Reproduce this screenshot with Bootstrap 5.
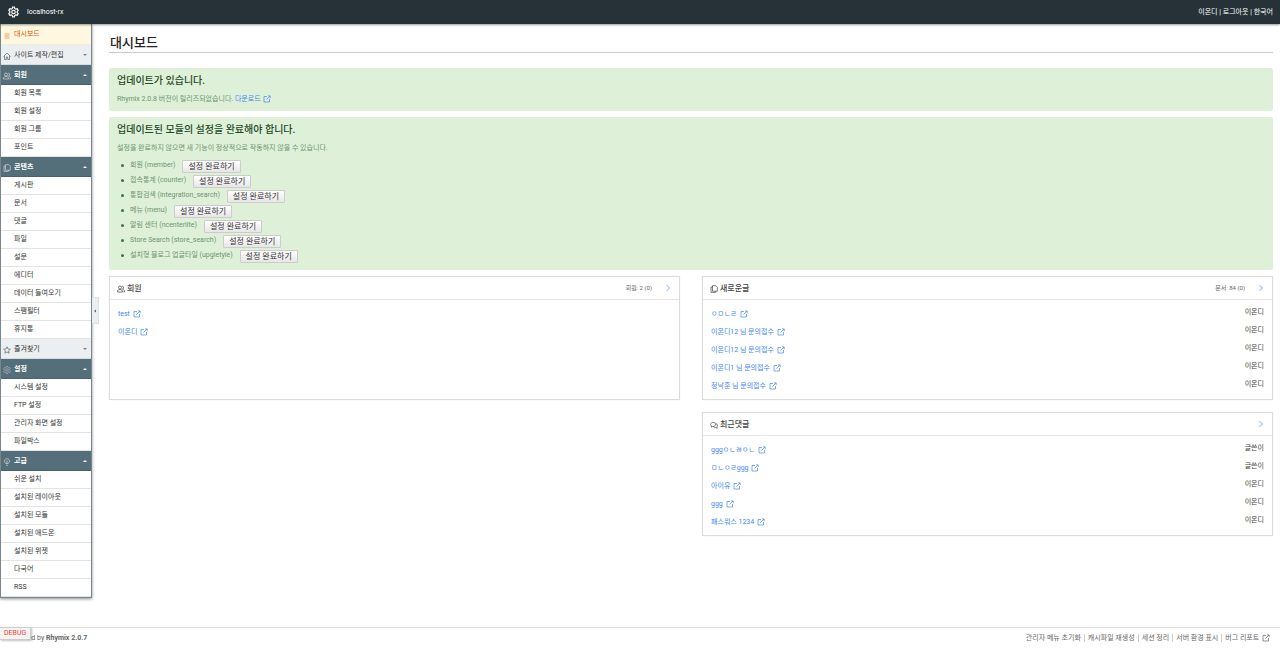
<!DOCTYPE html>
<html lang="ko">
<head>
<meta charset="utf-8">
<meta name="viewport" content="width=device-width, initial-scale=1">
<title>대시보드 - Rhymix</title>
<link href="https://cdn.jsdelivr.net/npm/bootstrap@5.3.0/dist/css/bootstrap.min.css" rel="stylesheet">
<style>
  body { font-family: Roboto, "Noto Sans CJK KR", sans-serif; font-size: 7px; line-height: 18px; color: #444; background: #fff; }
  a { text-decoration: none; color: #4285f4; }
  svg { fill: none; stroke: currentColor; flex: none; }
  .ico { width: 8px; height: 8px; stroke-width: .7; }
  .out { margin-left: 1px; }
  .topbar { height: 24px; background: #263238; color: #fff; box-shadow: 0 1px 2px rgba(0,0,0,.4); z-index: 3; padding: 0 7px 0 8px; }
  .topbar a { color: #fff; }
  .topbar svg { stroke-width: 1.3; }
  .side { width: 92px; flex: none; }
  .menu { border: 1px solid #78868d; border-top: 0; box-shadow: 0 1px 3px rgba(0,0,0,.45); }
  .menu ul { background: #fff; }
  .menu-top { height: 20px; padding: 0 4px 0 2px; gap: 3px; width: 100%; border: 0; border-bottom: 1px solid #d5dce0; background: #eceff1; color: #333; text-align: left; }
  .menu-top.now { height: 21px; background: #fff8e1; color: #e65100; border-color: #f3ecd6; }
  .menu-top.open { background: #546e7a; color: #fff; border-color: #4a626d; font-weight: 700; }
  .menu-top .ico { margin-top: 3px; opacity: .75; }
  .menu-top .label-text { flex: 1; }
  .caret { width: 4px; border: 2px solid transparent; border-top-color: #78868d; border-bottom-width: 0; }
  .open .caret { border-top-width: 0; border-bottom: 2px solid #fff; }
  .sub a { display: block; height: 18px; line-height: 17px; padding-left: 13px; color: #333; border-bottom: 1px solid #e3e3e3; }
  .fold { left: 92px; top: 273px; width: 7px; height: 27px; line-height: 26px; padding: 0; border: 1px solid #dde1e4; border-left: 0; background: #eceff1; color: #546e7a; }
  .content-area { padding: 10px 7px 12px 17px; min-width: 0; }
  h1 { font-size: 13px; line-height: 18px; font-weight: 500; color: #222; padding-left: 1px; border-bottom: 1px solid #ccc; margin-bottom: 15px; }
  .notice { background: #dff0d8; color: #6d9470; border-radius: 2px; padding: 4px 8px 3px; margin-bottom: 6px; }
  .notice h2 { font-size: 10px; line-height: 18px; font-weight: 500; color: #234a26; margin: 0; }
  .notice ul { margin: 1px 0 4px; }
  .notice li { height: 15px; line-height: 15px; display: flex; align-items: center; }
  .notice li::before { content: ""; width: 3px; height: 3px; border-radius: 50%; background: #3c763d; margin: 0 6px 0 4px; }
  .run { height: 13px; font-size: 8px; line-height: 11px; padding: 0 5px; margin: 2px 0 0 7px; border: 1px solid #ccc; border-radius: 1px; background: linear-gradient(#fff, #e6e6e6); color: #333; }
  .panels { column-gap: 22px; }
  .panel { border: 1px solid #dcdcdc; min-height: 124px; box-shadow: 0 0 1px rgba(0,0,0,.1); }
  .panel header { height: 23px; border-bottom: 1px solid #e3e3e3; padding: 0 7px; }
  .panel h2 { font-size: 8px; font-weight: 500; margin: 2px 0 0; gap: 2px; color: #444; }
  .count { font-size: 6px; color: #666; }
  .panel ul { padding: 3px 8px 4px; }
  .panel li { height: 18px; }
  .panel li a { padding-top: 2px; }
  .foot { border-top: 1px solid #e0e0e0; height: 33px; padding: 1px 10px 0 8px; color: #666; }
  .foot a { color: #666; }
  .foot nav a + a { border-left: 1px solid #ccc; margin-left: 3px; padding-left: 3px; line-height: 8px; }
  .debug { left: 0; bottom: 20px; height: 13px; line-height: 11px; padding: 0 4px; font-size: 7px; border: 1px solid #ccc; border-left: 0; background: #f4f4f4; color: #f44336; box-shadow: 1px 1px 2px rgba(0,0,0,.25); }
</style>
</head>
<body class="d-flex flex-column min-vh-100">
<svg class="d-none">
  <symbol id="gear" viewBox="0 0 12 12"><path d="M5 .7h2l.4 1.6 1.1.6 1.6-.5 1 1.8L10 5.4v1.2l1.1 1.2-1 1.8-1.6-.5-1.1.6L7 11.300H5l-.4-1.600-1.100-.6-1.600.5-1-1.800L2 6.600V5.400L.9 4.200l1-1.800 1.600.5 1.100-.6z"/><circle cx="6" cy="6" r="1.9"/></symbol>
  <symbol id="list" viewBox="0 0 8 8"><path d="M1.500 2h5M1.500 4h5M1.500 6h5"/></symbol>
  <symbol id="home" viewBox="0 0 8 8"><path d="M.5 4.500L4 1l3.500 3.500M1.500 4v3.500h1.800V5h1.400v2.500h1.800V4"/></symbol>
  <symbol id="users" viewBox="0 0 8 8"><circle cx="3" cy="2.500" r="1.500"/><path d="M.5 7c0-2 1-2.500 2.500-2.500S5.500 5 5.500 7zM5 1c2 0 2 3 .5 3C7 4.500 7.500 5.500 7.500 7h-1"/></symbol>
  <symbol id="docs" viewBox="0 0 8 8"><path d="M2.500.7h3.300l1.500 1.500v4H2.500zM2.500 2H1v5.400h4.500V6.300"/></symbol>
  <symbol id="star" viewBox="0 0 8 8"><path d="M4 .8l1 2.200 2.400.2-1.800 1.600.5 2.400L4 6 1.900 7.200l.5-2.400L.6 3.200 3 3z"/></symbol>
  <symbol id="bulb" viewBox="0 0 8 8"><path d="M3 5.500C0 3.800 1.500.7 4 .7s4 3.100 1 4.800zM3 7.300h2M4 5.500v-2l-1-1M4 3.500l1-1"/></symbol>
  <symbol id="talk" viewBox="0 0 8 8"><path d="M1.700 5.300C-.2 4 .6 1.300 3 1.300s3.200 1.800 2.200 3.200S3 5.300 1 6zM5.600 2.500c2 .3 2.300 2.500 1.200 3.500l.4 1.200-1.400-.6c-1 .2-1.800 0-2.300-.7"/></symbol>
  <symbol id="ext" viewBox="0 0 8 8"><path d="M4 1.500H1v5.500h5.500V4M5 .9h2.200v2.300M7 1L3.500 4.500"/></symbol>
  <symbol id="next" viewBox="0 0 8 8"><path d="M2.500 1l3 3-3 3"/></symbol>
</svg>

<header class="topbar d-flex align-items-center justify-content-between position-relative">
  <a href="#" class="d-flex align-items-center gap-2"><svg width="11" height="12"><use href="#gear"/></svg><span>localhost-rx</span></a>
  <nav><a href="#">이온디</a> | <a href="#">로그아웃</a> | <a href="#">한국어</a></nav>
</header>

<div class="d-flex flex-grow-1 position-relative">
  <aside class="side">
    <nav class="menu">
      <a href="#" class="menu-top now d-flex align-items-center"><svg class="ico"><use href="#list"/></svg><span class="label-text">대시보드</span></a>
      <button class="menu-top d-flex align-items-center"><svg class="ico"><use href="#home"/></svg><span class="label-text">사이트 제작/편집</span><i class="caret"></i></button>
      <button class="menu-top open d-flex align-items-center"><svg class="ico"><use href="#users"/></svg><span class="label-text">회원</span><i class="caret"></i></button>
      <ul class="sub list-unstyled mb-0">
        <li><a href="#">회원 목록</a></li><li><a href="#">회원 설정</a></li><li><a href="#">회원 그룹</a></li><li><a href="#">포인트</a></li>
      </ul>
      <button class="menu-top open d-flex align-items-center"><svg class="ico"><use href="#docs"/></svg><span class="label-text">콘텐츠</span><i class="caret"></i></button>
      <ul class="sub list-unstyled mb-0">
        <li><a href="#">게시판</a></li><li><a href="#">문서</a></li><li><a href="#">댓글</a></li><li><a href="#">파일</a></li><li><a href="#">설문</a></li><li><a href="#">에디터</a></li><li><a href="#">데이터 들여오기</a></li><li><a href="#">스팸필터</a></li><li><a href="#">휴지통</a></li>
      </ul>
      <button class="menu-top d-flex align-items-center"><svg class="ico"><use href="#star"/></svg><span class="label-text">즐겨찾기</span><i class="caret"></i></button>
      <button class="menu-top open d-flex align-items-center"><svg class="ico" viewBox="0 0 12 12"><use href="#gear"/></svg><span class="label-text">설정</span><i class="caret"></i></button>
      <ul class="sub list-unstyled mb-0">
        <li><a href="#">시스템 설정</a></li><li><a href="#">FTP 설정</a></li><li><a href="#">관리자 화면 설정</a></li><li><a href="#">파일박스</a></li>
      </ul>
      <button class="menu-top open d-flex align-items-center"><svg class="ico"><use href="#bulb"/></svg><span class="label-text">고급</span><i class="caret"></i></button>
      <ul class="sub list-unstyled mb-0">
        <li><a href="#">쉬운 설치</a></li><li><a href="#">설치된 레이아웃</a></li><li><a href="#">설치된 모듈</a></li><li><a href="#">설치된 애드온</a></li><li><a href="#">설치된 위젯</a></li><li><a href="#">다국어</a></li><li><a href="#">RSS</a></li>
      </ul>
    </nav>
    <button class="fold position-absolute" aria-label="메뉴 접기"><svg class="d-block" width="6" height="8" viewBox="0 0 6 8"><path d="M4 2.500L2 4l2 1.500z" fill="currentColor" stroke="none"/></svg></button>
  </aside>

  <main class="content-area flex-grow-1">
    <h1>대시보드</h1>
    <section class="notice">
      <h2>업데이트가 있습니다.</h2>
      <p class="mb-0">Rhymix 2.0.8 버전이 릴리즈되었습니다. <a href="#">다운로드 <svg class="ico out"><use href="#ext"/></svg></a></p>
    </section>
    <section class="notice">
      <h2>업데이트된 모듈의 설정을 완료해야 합니다.</h2>
      <p class="mb-0">설정을 완료하지 않으면 새 기능이 정상적으로 작동하지 않을 수 있습니다.</p>
      <ul class="list-unstyled">
        <li>회원 (member)<button class="run">설정 완료하기</button></li>
        <li>접속통계 (counter)<button class="run">설정 완료하기</button></li>
        <li>통합검색 (integration_search)<button class="run">설정 완료하기</button></li>
        <li>메뉴 (menu)<button class="run">설정 완료하기</button></li>
        <li>알림 센터 (ncenterlite)<button class="run">설정 완료하기</button></li>
        <li>Store Search (store_search)<button class="run">설정 완료하기</button></li>
        <li>설치형 블로그 업글타일 (upgletyle)<button class="run">설정 완료하기</button></li>
      </ul>
    </section>
    <div class="panels d-flex align-items-start">
      <div class="w-50">
        <section class="panel">
          <header class="d-flex align-items-center"><h2 class="d-flex align-items-center me-auto"><svg class="ico"><use href="#users"/></svg>회원</h2><span class="count me-2">회원: 2 (0)</span><a href="#" aria-label="회원 더 보기" class="d-flex ms-1"><svg class="ico"><use href="#next"/></svg></a></header>
          <ul class="list-unstyled mb-0">
            <li class="d-flex"><a href="#">test <svg class="ico out"><use href="#ext"/></svg></a></li>
            <li class="d-flex"><a href="#">이온디 <svg class="ico out"><use href="#ext"/></svg></a></li>
          </ul>
        </section>
      </div>
      <div class="w-50 d-flex flex-column gap-2">
        <section class="panel mb-1">
          <header class="d-flex align-items-center"><h2 class="d-flex align-items-center me-auto"><svg class="ico"><use href="#docs"/></svg>새로운글</h2><span class="count me-2">문서: 84 (0)</span><a href="#" aria-label="새로운글 더 보기" class="d-flex ms-1"><svg class="ico"><use href="#next"/></svg></a></header>
          <ul class="list-unstyled mb-0">
            <li class="d-flex justify-content-between"><a href="#">ㅇㅁㄴㄹ <svg class="ico out"><use href="#ext"/></svg></a><span>이온디</span></li>
            <li class="d-flex justify-content-between"><a href="#">이온디12 님 문의접수 <svg class="ico out"><use href="#ext"/></svg></a><span>이온디</span></li>
            <li class="d-flex justify-content-between"><a href="#">이온디12 님 문의접수 <svg class="ico out"><use href="#ext"/></svg></a><span>이온디</span></li>
            <li class="d-flex justify-content-between"><a href="#">이온디1 님 문의접수 <svg class="ico out"><use href="#ext"/></svg></a><span>이온디</span></li>
            <li class="d-flex justify-content-between"><a href="#">정낙훈 님 문의접수 <svg class="ico out"><use href="#ext"/></svg></a><span>이온디</span></li>
          </ul>
        </section>
        <section class="panel">
          <header class="d-flex align-items-center"><h2 class="d-flex align-items-center me-auto"><svg class="ico"><use href="#talk"/></svg>최근댓글</h2><a href="#" aria-label="최근댓글 더 보기" class="d-flex"><svg class="ico"><use href="#next"/></svg></a></header>
          <ul class="list-unstyled mb-0">
            <li class="d-flex justify-content-between"><a href="#">gggㅇㄴㅀㅇㄴ <svg class="ico out"><use href="#ext"/></svg></a><span>글쓴이</span></li>
            <li class="d-flex justify-content-between"><a href="#">ㅁㄴㅇㄹggg <svg class="ico out"><use href="#ext"/></svg></a><span>글쓴이</span></li>
            <li class="d-flex justify-content-between"><a href="#">아이유 <svg class="ico out"><use href="#ext"/></svg></a><span>이온디</span></li>
            <li class="d-flex justify-content-between"><a href="#">ggg <svg class="ico out"><use href="#ext"/></svg></a><span>이온디</span></li>
            <li class="d-flex justify-content-between"><a href="#">패스워스 1234 <svg class="ico out"><use href="#ext"/></svg></a><span>이온디</span></li>
          </ul>
        </section>
      </div>
    </div>
  </main>
</div>

<footer class="foot d-flex justify-content-between position-relative">
  <p class="mb-0">Powered by <a href="#" class="fw-bold">Rhymix 2.0.7</a></p>
  <nav class="d-flex align-items-center align-self-start"><a href="#">관리자 메뉴 초기화</a><a href="#">캐시파일 재생성</a><a href="#">세션 정리</a><a href="#">서버 환경 표시</a><a href="#">버그 리포트 <svg class="ico out"><use href="#ext"/></svg></a></nav>
  <button class="debug position-absolute">DEBUG</button>
</footer>
<script src="https://cdn.jsdelivr.net/npm/bootstrap@5.3.0/dist/js/bootstrap.bundle.min.js"></script>
</body>
</html>
